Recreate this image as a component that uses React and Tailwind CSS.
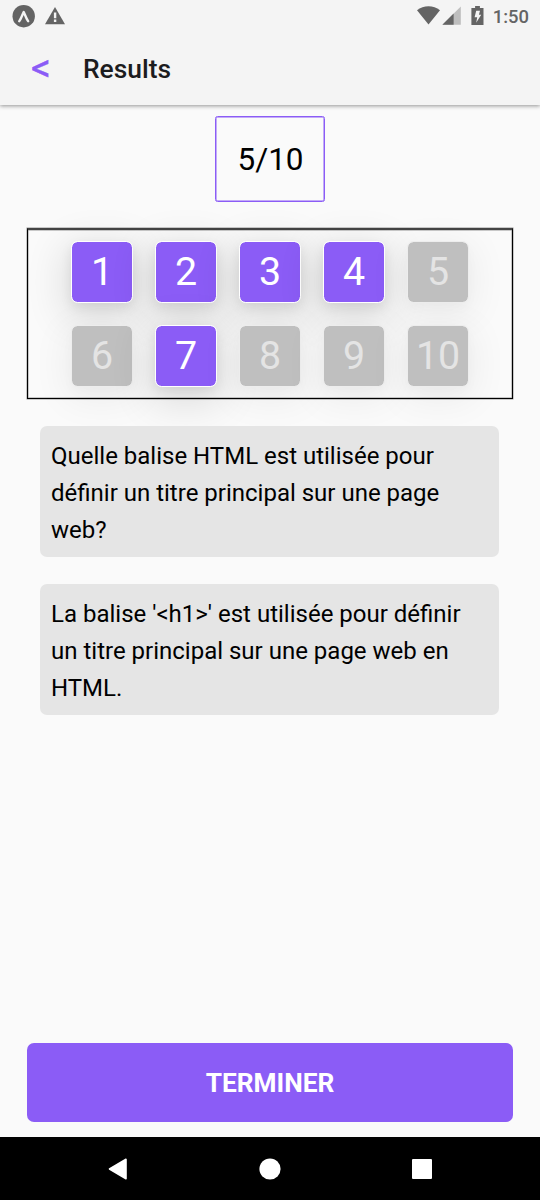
const tiles = [
  { n: 1, on: true },
  { n: 2, on: true },
  { n: 3, on: true },
  { n: 4, on: true },
  { n: 5, on: false },
  { n: 6, on: false },
  { n: 7, on: true },
  { n: 8, on: false },
  { n: 9, on: false },
  { n: 10, on: false },
];

function StatusBar() {
  return (
    <div className="flex h-8 items-center justify-between pl-3 pr-[11px] text-[#646464]">
      <div className="flex items-center gap-[10px]">
        <svg width="23" height="23" viewBox="0 0 23 23">
          <circle cx="11.7" cy="11.2" r="11.2" fill="#646464" />
          <path d="M7.2 16.2C8.8 14.4 10.2 10.2 11.7 7C13.2 10.2 14.6 14.4 16.2 16.2" fill="none" stroke="#f4f4f4" strokeWidth="2.4" strokeLinecap="round" strokeLinejoin="round" />
        </svg>
        <svg width="20" height="18" viewBox="0 0 20 18">
          <path d="M10 0L20 17.2H0Z" fill="#646464" />
          <path d="M8.9 5.5h2.4v5.8h-2.4zM8.9 12.6h2.4v2.4h-2.4z" fill="#f4f4f4" />
        </svg>
      </div>
      <div className="flex items-center">
        <svg width="66" height="20" viewBox="0 0 66 20" className="overflow-visible">
          <path d="M0 4.2C6.5-1.1 16.5-1.1 23 4.2L11.5 18.5Z" fill="#646464" />
          <path d="M43.8.4V18.8H25.4Z" fill="#bebebe" />
          <path d="M36.6 7.6V18.8H25.4Z" fill="#646464" />
          <path d="M58.1 0h4.8v2h3.6v17H54.4V2h3.7Z" fill="#646464" />
          <path d="M59.2 4.8h3.8l-1.1 4h2.3l-5 8 1-5.5h-2.6Z" fill="#f4f4f4" />
        </svg>
        <span className="ml-[10px] pt-px text-[18.4px] font-medium leading-5">1:50</span>
      </div>
    </div>
  );
}

function Card({ children }) {
  return (
    <div className="relative ml-[40px] mr-[41px] h-[131.5px] rounded-[7px] bg-[#e5e5e5] pl-[11px] pr-[16px] pt-[12.5px] text-[24px] leading-[37px] text-black">
      {children}
    </div>
  );
}

export default function App() {
  return (
    <div className="flex h-[1200px] w-[540px] flex-col overflow-hidden bg-[#fafafa] font-['Roboto',sans-serif]">
      <header className="relative h-[105px] shrink-0 bg-[#f4f4f4] shadow-[0_1px_4px_rgba(0,0,0,0.42)]">
        <StatusBar />
        <div className="flex h-[74px] items-center pl-[31px]">
          <button className="w-[52px] pb-[2px] text-left text-[39.375px] leading-none text-[#8b5cf6] [-webkit-text-stroke:0.4px_#8b5cf6]">&lt;</button>
          <h1 className="pt-px text-[26.4px] font-medium leading-none text-[#1c1c1e]">Results</h1>
        </div>
      </header>

      <main className="flex grow flex-col">
        <div className="mx-auto mt-[10.5px] flex h-[86px] w-[110px] items-center justify-center rounded-[2.5px] border border-[#8b5cf6] pt-[3px] pl-px text-[31.5px] leading-none text-black shadow-[inset_0_0_0_0.5px_#8b5cf6]">
          5/10
        </div>

        <section className="mx-[27px] mt-[26.5px] h-[171px] border border-t-2 border-black border-t-[#444] pl-[43px] pt-[11px] shadow-[0_0_0_0.5px_rgba(0,0,0,0.4),inset_0_0_0_0.5px_rgba(0,0,0,0.4)]">
          <div className="grid grid-cols-[repeat(5,62px)] gap-[22px]">
            {tiles.map(({ n, on }) => (
              <div
                key={n}
                className={
                  on
                    ? "relative flex h-[62px] items-center justify-center rounded-[6.5px] border border-white bg-[#8b5cf6] bg-clip-padding text-[39.375px] leading-none text-white shadow-[0_5px_12px_rgba(0,0,0,0.08),0_10px_40px_6px_rgba(0,0,0,0.12)]"
                    : "relative flex h-[62px] items-center justify-center rounded-[6.5px] border border-[#ededed] bg-[#bfbfbf] bg-clip-padding text-[39.375px] leading-none text-[#e4e4e4] shadow-[0_5px_12px_rgba(0,0,0,0.025),0_8px_36px_6px_rgba(0,0,0,0.055)]"
                }
              >
                {n}
              </div>
            ))}
          </div>
        </section>

        <div className="mt-[26.5px] flex flex-col gap-[26.5px]">
          <Card>Quelle balise HTML est utilisée pour définir un titre principal sur une page web?</Card>
          <Card>La balise '&lt;h1&gt;' est utilisée pour définir un titre principal sur une page web en HTML.</Card>
        </div>

        <button className="mx-[27px] mb-[15.5px] mt-auto h-[78.5px] rounded-[7px] bg-[#8b5cf6] pt-[2px] text-[26.25px] font-bold leading-none text-white">
          TERMINER
        </button>
      </main>

      <nav className="flex h-[63px] shrink-0 items-center justify-between bg-black px-[108px]">
        <svg width="20" height="22" viewBox="0 0 20 22">
          <path d="M18 1.3V20.7L1.5 11Z" fill="#fff" stroke="#fff" strokeWidth="1.6" strokeLinejoin="round" />
        </svg>
        <svg width="22" height="22" viewBox="0 0 22 22">
          <circle cx="11" cy="11" r="10.6" fill="#fff" />
        </svg>
        <svg width="20" height="20" viewBox="0 0 20 20">
          <rect width="20" height="20" rx="1" fill="#fff" />
        </svg>
      </nav>
    </div>
  );
}
